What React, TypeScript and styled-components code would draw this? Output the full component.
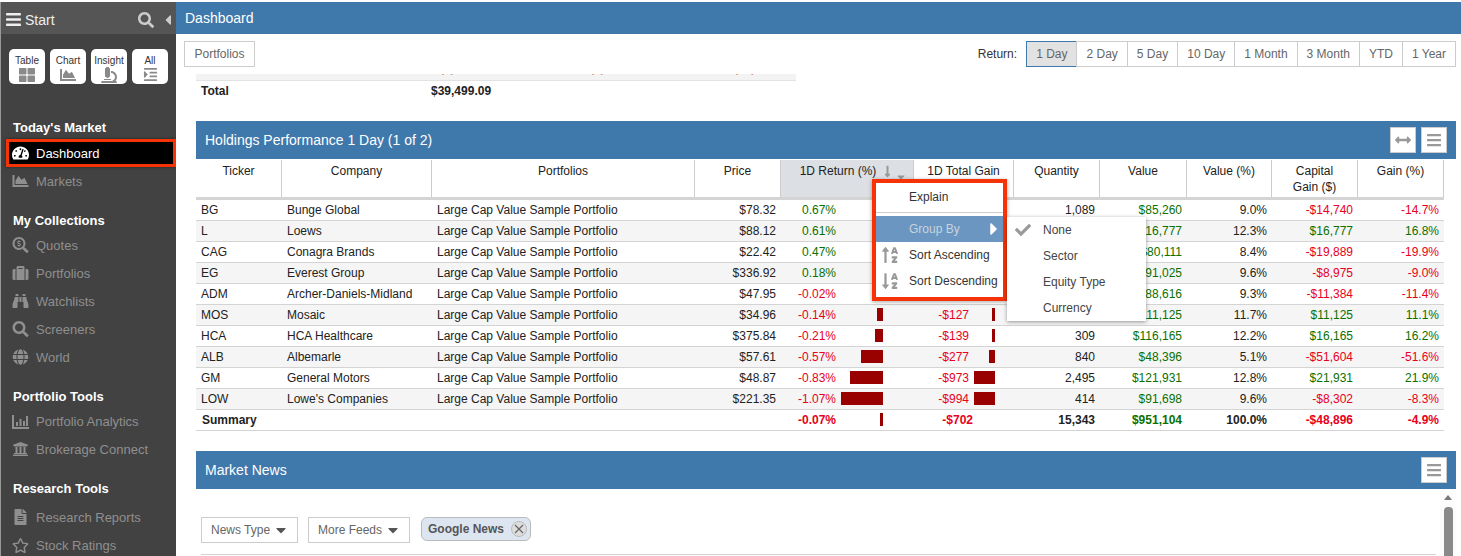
import React from "react";
import styled, { createGlobalStyle } from "styled-components";
import {
  FaArrowsAltH,
  FaBars,
  FaBinoculars,
  FaCaretDown,
  FaCaretLeft,
  FaCaretRight,
  FaChartArea,
  FaCheck,
  FaFileAlt,
  FaGlobe,
  FaIndent,
  FaLongArrowAltDown,
  FaMicroscope,
  FaRegStar,
  FaSearch,
  FaSearchDollar,
  FaSortAlphaDown,
  FaSortAlphaUp,
  FaSuitcase,
  FaTachometerAlt,
  FaThLarge,
  FaUniversity,
} from "react-icons/fa";

const BLUE = "#3f78ab";
const COLUMNS = "86px 150px 263px 86px 133px 100px 86px 87px 85px 86px 86px";

const GlobalStyle = createGlobalStyle`
  html, body {
    margin: 0;
    padding: 0;
    background: #fff;
    font-family: "Liberation Sans", Arial, sans-serif;
    font-size: 12px;
    color: #222;
    overflow: hidden;
  }
`;

const Page = styled.div`
  display: flex;
  height: 554px;
  padding-top: 2px;
  overflow: hidden;
`;

const Sidebar = styled.aside`
  width: 175px;
  flex: none;
  background: #424242;
  border-left: 1px solid #999;
  overflow: hidden;
`;

const StartBar = styled.div`
  display: flex;
  align-items: center;
  height: 32px;
  box-sizing: border-box;
  padding: 3px 0 0 4px;
  background: #555;
  color: #eee;
  font-size: 14px;
  svg {
    flex: none;
  }
`;

const StartLabel = styled.span`
  flex: 1;
  margin-left: 3px;
`;

const Tiles = styled.div`
  display: flex;
  gap: 5px;
  padding: 15px 0 0 8px;
  height: 35px;
`;

const Tile = styled.div`
  width: 36px;
  height: 35px;
  display: flex;
  flex-direction: column;
  align-items: center;
  background: #fff;
  border-radius: 5px;
  color: #333;
  font-size: 10px;
  line-height: 12px;
  padding-top: 6px;
  box-sizing: border-box;
  svg {
    color: #8a8a8a;
    margin-top: 0;
  }
`;

const NavSection = styled.section<{ $top: number }>`
  margin-top: ${(p) => p.$top}px;
`;

const NavTitle = styled.div<{ $gap?: number }>`
  height: 20px;
  line-height: 20px;
  padding-left: 12px;
  margin-bottom: ${(p) => p.$gap ?? 0}px;
  color: #fff;
  font-size: 13px;
  font-weight: bold;
`;

const NavItem = styled.div<{ $active?: boolean }>`
  display: flex;
  align-items: center;
  height: 28px;
  padding-left: 11px;
  color: #8f8f8f;
  font-size: 13px;
  svg {
    width: 17px;
    flex: none;
    margin-right: 7px;
  }
  ${(p) =>
    p.$active &&
    `
    box-sizing: border-box;
    margin-left: 5px;
    padding-left: 3px;
    color: #fff;
    background: #000;
    border: 3px solid #f63207;
    box-shadow: 0 0 3px rgba(0,0,0,.5);
  `}
`;

const Main = styled.main`
  flex: 1;
  min-width: 0;
  display: flex;
  flex-direction: column;
`;

const TitleBar = styled.header`
  height: 32px;
  flex: none;
  line-height: 32px;
  padding-left: 9px;
  background: ${BLUE};
  color: #fff;
  font-size: 14px;
`;

const Toolbar = styled.div`
  height: 40px;
  flex: none;
  display: flex;
  align-items: flex-start;
  justify-content: space-between;
  padding: 7px 5px 0 8px;
  box-sizing: border-box;
`;

const ToolButton = styled.div<{ $active?: boolean }>`
  height: 26px;
  line-height: 24px;
  box-sizing: border-box;
  padding: 0 9px;
  border: 1px solid ${(p) => (p.$active ? BLUE : "#ccc")};
  background: ${(p) => (p.$active ? "#e2e2e2" : "#fff")};
  color: #666;
  font-size: 12px;
  white-space: nowrap;
`;

const PortfoliosButton = styled(ToolButton)`
  padding: 0 9.5px;
`;

const ReturnGroup = styled.div`
  display: flex;
  align-items: center;
  ${ToolButton} + ${ToolButton} {
    margin-left: -1px;
  }
`;

const ReturnLabel = styled.span`
  margin-right: 9px;
  color: #333;
`;

const Content = styled.div`
  flex: 1;
  min-height: 0;
  overflow: hidden;
  padding: 0 5px 0 20px;
`;

const ClippedRow = styled.div`
  width: 600px;
  height: 6px;
  overflow: hidden;
  background: #f3f3f3;
  border-bottom: 1px solid #e2e2e2;
  display: grid;
  grid-template-columns: 244px 150px 144px 1fr;
  align-items: start;
  color: #d8602a;
  line-height: 14px;
  & > span {
    margin-top: -13px;
  }
`;

const TotalRow = styled.div`
  display: grid;
  grid-template-columns: 230px 1fr;
  height: 20px;
  line-height: 20px;
  padding-left: 5px;
  font-weight: bold;
`;

const Panel = styled.section<{ $top: number }>`
  position: relative;
  margin-top: ${(p) => p.$top}px;
`;

const PanelBar = styled.div`
  display: flex;
  align-items: center;
  justify-content: space-between;
  height: 38px;
  padding: 0 9px;
  background: ${BLUE};
  color: #fff;
  font-size: 14px;
`;

const PanelActions = styled.div`
  display: flex;
  gap: 5px;
`;

const SquareButton = styled.div`
  width: 26px;
  height: 26px;
  box-sizing: border-box;
  display: flex;
  align-items: center;
  justify-content: center;
  background: #fff;
  border: 1px solid #ccc;
  color: #999;
`;

const Grid = styled.div`
  width: 1248px;
  margin-top: 1px;
`;

const HeadRow = styled.div`
  display: grid;
  grid-template-columns: ${COLUMNS};
  height: 40px;
  box-sizing: border-box;
  border-bottom: 3px solid #d4d4d4;
`;

const HeadCell = styled.div<{ $sorted?: boolean }>`
  position: relative;
  padding-top: 3px;
  box-sizing: border-box;
  text-align: center;
  line-height: 16px;
  color: #222;
  border-right: 1px solid #ccc;
  background: ${(p) => (p.$sorted ? "#dcdfe3" : "#fff")};
  padding-right: ${(p) => (p.$sorted ? "18px" : "0")};
`;

const SortArrow = styled(FaLongArrowAltDown)`
  position: absolute;
  top: 5px;
  left: 100px;
  color: #999;
`;

const HeadCaret = styled(FaCaretDown)`
  position: absolute;
  top: 11px;
  left: 114px;
  color: #999;
`;

const Row = styled.div<{ $stripe?: boolean; $bold?: boolean }>`
  display: grid;
  grid-template-columns: ${COLUMNS};
  height: 21px;
  box-sizing: border-box;
  line-height: 20px;
  border-bottom: 1px solid #d4d4d4;
  background: ${(p) => (p.$stripe ? "#f5f5f5" : "#fff")};
  font-weight: ${(p) => (p.$bold ? "bold" : "normal")};
`;

const toneColor = { plain: "#222", up: "#0a7000", down: "#e8001c" };
type Tone = keyof typeof toneColor;

const Cell = styled.div<{ $right?: boolean; $tone?: Tone }>`
  padding: 0 5px;
  text-align: ${(p) => (p.$right ? "right" : "left")};
  color: ${(p) => toneColor[p.$tone ?? "plain"]};
  white-space: nowrap;
`;

const SummaryCell = styled(Cell)`
  grid-column: span 4;
  padding-left: 6px;
`;

const BarCell = styled.div`
  display: flex;
  align-items: stretch;
`;

const BarText = styled.div<{ $width: number; $tone: Tone }>`
  flex: none;
  width: ${(p) => p.$width}px;
  text-align: right;
  color: ${(p) => toneColor[p.$tone]};
`;

const BarTrack = styled.div<{ $width: number }>`
  flex: none;
  width: ${(p) => p.$width}px;
  display: flex;
  justify-content: flex-end;
  padding: 3px 0;
  box-sizing: border-box;
`;

const Bar = styled.div`
  background: #990000;
  height: 13px;
`;

const Menu = styled.div`
  position: absolute;
  left: 676px;
  top: 58px;
  width: 135px;
  height: 122px;
  box-sizing: border-box;
  background: #fff;
  border: 4px solid #f63207;
  box-shadow: 0 1px 4px rgba(0, 0, 0, 0.35);
  color: #333;
`;

const MenuItem = styled.div<{ $selected?: boolean }>`
  position: relative;
  display: flex;
  align-items: center;
  height: 26px;
  padding-left: 5px;
  background: ${(p) => (p.$selected ? "#6b96c1" : "transparent")};
  color: ${(p) => (p.$selected ? "#c9d3dd" : "#333")};
  white-space: nowrap;
`;

const ExplainItem = styled(MenuItem)`
  box-sizing: border-box;
  padding-top: 2px;
`;

const MenuIcon = styled.span`
  width: 28px;
  flex: none;
  display: flex;
  color: #999;
`;

const MenuDivider = styled.div`
  height: 1px;
  margin: 3px 0;
  background: #ccc;
`;

const MenuArrow = styled(FaCaretRight)`
  position: absolute;
  right: -1px;
  color: #fff;
`;

const SubMenu = styled.div`
  position: absolute;
  left: 811px;
  top: 96px;
  width: 139px;
  background: #fff;
  box-shadow: 0 1px 4px rgba(0, 0, 0, 0.4);
  color: #333;
`;

const SubItem = styled.div`
  display: flex;
  align-items: center;
  height: 26px;
  color: #444;
`;

const CheckSlot = styled.span`
  width: 36px;
  flex: none;
  padding-left: 8px;
  box-sizing: border-box;
  display: flex;
  color: #999;
`;

const NewsBody = styled.div`
  display: flex;
`;

const NewsMain = styled.div`
  flex: 1;
  min-width: 0;
  padding: 28px 4px 0 5px;
`;

const FilterRow = styled.div`
  display: flex;
  align-items: flex-start;
  padding-bottom: 11px;
  border-bottom: 1px solid #d4d4d4;
`;

const FilterButton = styled.div<{ $width: number }>`
  display: flex;
  align-items: center;
  justify-content: space-between;
  width: ${(p) => p.$width}px;
  height: 26px;
  box-sizing: border-box;
  margin-right: 10px;
  padding: 0 8px 0 9px;
  border: 1px solid #ccc;
  color: #666;
  svg {
    color: #555;
  }
`;

const Chip = styled.div`
  display: flex;
  align-items: center;
  gap: 7px;
  height: 24px;
  width: 110px;
  box-sizing: border-box;
  margin-left: 1px;
  padding-left: 6px;
  background: #dde6f0;
  border: 1px solid #bbb;
  border-radius: 6px;
  color: #555;
  font-weight: bold;
`;

const ChipClose = styled.span`
  width: 16px;
  height: 16px;
  box-sizing: border-box;
  flex: none;
  display: flex;
  align-items: center;
  justify-content: center;
  border: 1px solid #bbb;
  border-radius: 50%;
  background: #ddd;
  color: #666;
`;

const ScrollRail = styled.div`
  width: 16px;
  flex: none;
  padding-top: 6px;
  height: 67px;
  display: flex;
  flex-direction: column;
  align-items: center;
  background: #fcfcfc;
`;

const ScrollUp = styled.div`
  width: 0;
  height: 0;
  border-left: 4.5px solid transparent;
  border-right: 4.5px solid transparent;
  border-bottom: 5px solid #777;
`;

const ScrollThumb = styled.div`
  width: 9px;
  height: 60px;
  flex: none;
  margin-top: 7px;
  background: #8a8a8a;
  border-radius: 4px 4px 0 0;
`;

const AnalyticsIcon = () => (
  <svg viewBox="0 0 17 15" height="15" fill="currentColor">
    <path d="M0 1h2v12h15v2H0z" />
    <path d="M4 8h2v4H4zM7.5 5h2v7h-2zM11 7h2v5h-2zM14 2h2v10h-2z" />
  </svg>
);

const CloseIcon = () => (
  <svg viewBox="0 0 10 10" width="10" height="10" stroke="currentColor" strokeWidth="1.2">
    <path d="M1 1l8 8M9 1l-8 8" />
  </svg>
);

type Holding = {
  ticker: string;
  company: string;
  price: string;
  ret: string;
  retBar: number;
  gain: string;
  gainBar: number;
  qty: string;
  value: string;
  valuePct: string;
  capital: string;
  gainPct: string;
};

const holdings: Holding[] = [
  { ticker: "BG", company: "Bunge Global", price: "$78.32", ret: "0.67%", retBar: 0, gain: "$567", gainBar: 0, qty: "1,089", value: "$85,260", valuePct: "9.0%", capital: "-$14,740", gainPct: "-14.7%" },
  { ticker: "L", company: "Loews", price: "$88.12", ret: "0.61%", retBar: 0, gain: "$700", gainBar: 0, qty: "1,325", value: "$116,777", valuePct: "12.3%", capital: "$16,777", gainPct: "16.8%" },
  { ticker: "CAG", company: "Conagra Brands", price: "$22.42", ret: "0.47%", retBar: 0, gain: "$375", gainBar: 0, qty: "3,573", value: "$80,111", valuePct: "8.4%", capital: "-$19,889", gainPct: "-19.9%" },
  { ticker: "EG", company: "Everest Group", price: "$336.92", ret: "0.18%", retBar: 0, gain: "$164", gainBar: 0, qty: "270", value: "$91,025", valuePct: "9.6%", capital: "-$8,975", gainPct: "-9.0%" },
  { ticker: "ADM", company: "Archer-Daniels-Midland", price: "$47.95", ret: "-0.02%", retBar: 0, gain: "-$18", gainBar: 0, qty: "1,848", value: "$88,616", valuePct: "9.3%", capital: "-$11,384", gainPct: "-11.4%" },
  { ticker: "MOS", company: "Mosaic", price: "$34.96", ret: "-0.14%", retBar: 6, gain: "-$127", gainBar: 3, qty: "3,179", value: "$111,125", valuePct: "11.7%", capital: "$11,125", gainPct: "11.1%" },
  { ticker: "HCA", company: "HCA Healthcare", price: "$375.84", ret: "-0.21%", retBar: 8, gain: "-$139", gainBar: 3, qty: "309", value: "$116,165", valuePct: "12.2%", capital: "$16,165", gainPct: "16.2%" },
  { ticker: "ALB", company: "Albemarle", price: "$57.61", ret: "-0.57%", retBar: 22, gain: "-$277", gainBar: 6, qty: "840", value: "$48,396", valuePct: "5.1%", capital: "-$51,604", gainPct: "-51.6%" },
  { ticker: "GM", company: "General Motors", price: "$48.87", ret: "-0.83%", retBar: 33, gain: "-$973", gainBar: 21, qty: "2,495", value: "$121,931", valuePct: "12.8%", capital: "$21,931", gainPct: "21.9%" },
  { ticker: "LOW", company: "Lowe's Companies", price: "$221.35", ret: "-1.07%", retBar: 42, gain: "-$994", gainBar: 21, qty: "414", value: "$91,698", valuePct: "9.6%", capital: "-$8,302", gainPct: "-8.3%" },
];

const toneOf = (text: string): Tone => (text.startsWith("-") ? "down" : "up");

const periods = ["1 Day", "2 Day", "5 Day", "10 Day", "1 Month", "3 Month", "YTD", "1 Year"];

const App: React.FC = () => {
  return (
    <>
      <GlobalStyle />
      <Page>
        <Sidebar>
          <StartBar>
            <FaBars size={17} />
            <StartLabel>Start</StartLabel>
            <FaSearch size={16} color="#ccc" />
            <FaCaretLeft size={16} color="#ccc" style={{ marginLeft: 6 }} />
          </StartBar>
          <Tiles>
            <Tile>Table<FaThLarge size={16} /></Tile>
            <Tile>Chart<FaChartArea size={16} /></Tile>
            <Tile>Insight<FaMicroscope size={16} /></Tile>
            <Tile>All<FaIndent size={15} /></Tile>
          </Tiles>
          <NavSection $top={34}>
            <NavTitle $gap={1}>Today's Market</NavTitle>
            <NavItem $active><FaTachometerAlt size={18} />Dashboard</NavItem>
            <NavItem><FaChartArea size={16} />Markets</NavItem>
          </NavSection>
          <NavSection $top={16}>
            <NavTitle>My Collections</NavTitle>
            <NavItem><FaSearchDollar size={16} />Quotes</NavItem>
            <NavItem><FaSuitcase size={16} />Portfolios</NavItem>
            <NavItem><FaBinoculars size={16} />Watchlists</NavItem>
            <NavItem><FaSearch size={16} />Screeners</NavItem>
            <NavItem><FaGlobe size={16} />World</NavItem>
          </NavSection>
          <NavSection $top={16}>
            <NavTitle>Portfolio Tools</NavTitle>
            <NavItem><AnalyticsIcon />Portfolio Analytics</NavItem>
            <NavItem><FaUniversity size={16} />Brokerage Connect</NavItem>
          </NavSection>
          <NavSection $top={16}>
            <NavTitle $gap={4}>Research Tools</NavTitle>
            <NavItem><FaFileAlt size={16} />Research Reports</NavItem>
            <NavItem><FaRegStar size={17} />Stock Ratings</NavItem>
          </NavSection>
        </Sidebar>

        <Main>
          <TitleBar>Dashboard</TitleBar>
          <Toolbar>
            <PortfoliosButton>Portfolios</PortfoliosButton>
            <ReturnGroup>
              <ReturnLabel>Return:</ReturnLabel>
              {periods.map((p, i) => (
                <ToolButton key={p} $active={i === 0}>{p}</ToolButton>
              ))}
            </ReturnGroup>
          </Toolbar>

          <Content>
            <ClippedRow>
              <span />
              <span>(1)</span>
              <span>(1)</span>
              <span>(12)</span>
            </ClippedRow>
            <TotalRow>
              <span>Total</span>
              <span>$39,499.09</span>
            </TotalRow>

            <Panel $top={20}>
              <PanelBar>
                Holdings Performance 1 Day (1 of 2)
                <PanelActions>
                  <SquareButton><FaArrowsAltH size={16} /></SquareButton>
                  <SquareButton><FaBars size={16} /></SquareButton>
                </PanelActions>
              </PanelBar>
              <Grid>
                <HeadRow>
                  <HeadCell>Ticker</HeadCell>
                  <HeadCell>Company</HeadCell>
                  <HeadCell>Portfolios</HeadCell>
                  <HeadCell>Price</HeadCell>
                  <HeadCell $sorted>
                    1D Return (%)
                    <SortArrow size={13} />
                    <HeadCaret size={12} />
                  </HeadCell>
                  <HeadCell>1D Total Gain</HeadCell>
                  <HeadCell>Quantity</HeadCell>
                  <HeadCell>Value</HeadCell>
                  <HeadCell>Value (%)</HeadCell>
                  <HeadCell>Capital<br />Gain ($)</HeadCell>
                  <HeadCell>Gain (%)</HeadCell>
                </HeadRow>
                {holdings.map((h, i) => (
                  <Row key={h.ticker} $stripe={i % 2 === 1}>
                    <Cell>{h.ticker}</Cell>
                    <Cell>{h.company}</Cell>
                    <Cell>Large Cap Value Sample Portfolio</Cell>
                    <Cell $right>{h.price}</Cell>
                    <BarCell>
                      <BarText $width={55} $tone={toneOf(h.ret)}>{h.ret}</BarText>
                      <BarTrack $width={47}>
                        {h.retBar > 0 && <Bar style={{ width: h.retBar }} />}
                      </BarTrack>
                    </BarCell>
                    <BarCell>
                      <BarText $width={55} $tone={toneOf(h.gain)}>{h.gain}</BarText>
                      <BarTrack $width={26}>
                        {h.gainBar > 0 && <Bar style={{ width: h.gainBar }} />}
                      </BarTrack>
                    </BarCell>
                    <Cell $right>{h.qty}</Cell>
                    <Cell $right $tone="up">{h.value}</Cell>
                    <Cell $right>{h.valuePct}</Cell>
                    <Cell $right $tone={toneOf(h.capital)}>{h.capital}</Cell>
                    <Cell $right $tone={toneOf(h.gainPct)}>{h.gainPct}</Cell>
                  </Row>
                ))}
                <Row $bold>
                  <SummaryCell>Summary</SummaryCell>
                  <BarCell>
                    <BarText $width={55} $tone="down">-0.07%</BarText>
                    <BarTrack $width={47}>
                      <Bar style={{ width: 3 }} />
                    </BarTrack>
                  </BarCell>
                  <BarCell>
                    <BarText $width={59} $tone="down">-$702</BarText>
                  </BarCell>
                  <Cell $right>15,343</Cell>
                  <Cell $right $tone="up">$951,104</Cell>
                  <Cell $right>100.0%</Cell>
                  <Cell $right $tone="down">-$48,896</Cell>
                  <Cell $right $tone="down">-4.9%</Cell>
                </Row>
              </Grid>

              <Menu>
                <ExplainItem><MenuIcon />Explain</ExplainItem>
                <MenuDivider />
                <MenuItem $selected>
                  <MenuIcon />Group By
                  <MenuArrow size={20} />
                </MenuItem>
                <MenuItem><MenuIcon><FaSortAlphaUp size={18} /></MenuIcon>Sort Ascending</MenuItem>
                <MenuItem><MenuIcon><FaSortAlphaDown size={18} /></MenuIcon>Sort Descending</MenuItem>
              </Menu>
              <SubMenu>
                <SubItem><CheckSlot><FaCheck size={16} /></CheckSlot>None</SubItem>
                <SubItem><CheckSlot />Sector</SubItem>
                <SubItem><CheckSlot />Equity Type</SubItem>
                <SubItem><CheckSlot />Currency</SubItem>
              </SubMenu>
            </Panel>

            <Panel $top={20}>
              <PanelBar>
                Market News
                <PanelActions>
                  <SquareButton><FaBars size={16} /></SquareButton>
                </PanelActions>
              </PanelBar>
              <NewsBody>
                <NewsMain>
                  <FilterRow>
                    <FilterButton $width={97}>News Type<FaCaretDown size={16} /></FilterButton>
                    <FilterButton $width={102}>More Feeds<FaCaretDown size={16} /></FilterButton>
                    <Chip>
                      Google News
                      <ChipClose><CloseIcon /></ChipClose>
                    </Chip>
                  </FilterRow>
                </NewsMain>
                <ScrollRail>
                  <ScrollUp />
                  <ScrollThumb />
                </ScrollRail>
              </NewsBody>
            </Panel>
          </Content>
        </Main>
      </Page>
    </>
  );
};

export default App;
